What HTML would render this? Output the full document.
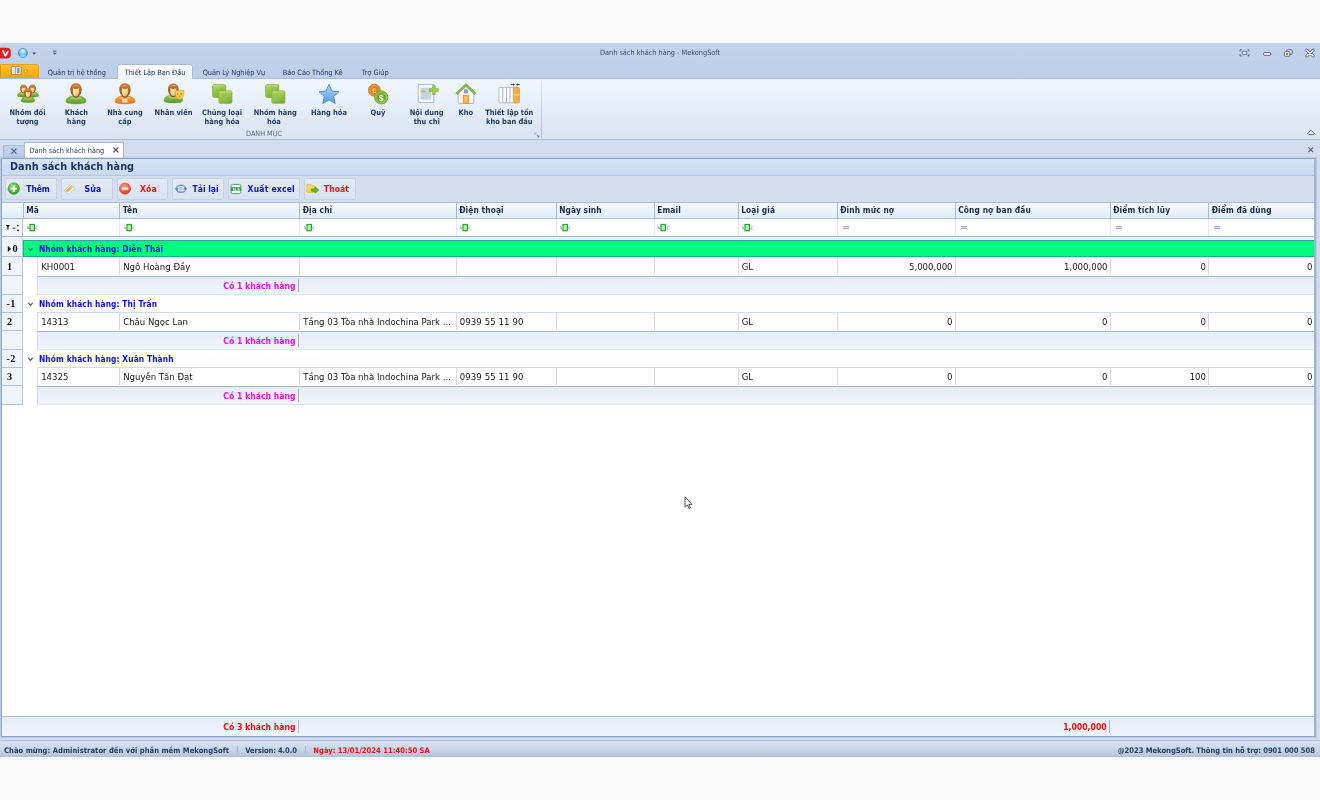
<!DOCTYPE html>
<html lang="vi">
<head>
<meta charset="utf-8">
<title>Danh sách khách hàng - MekongSoft</title>
<style>
*{box-sizing:border-box;margin:0;padding:0}
html,body{width:1320px;height:800px;overflow:hidden;background:#f9f9f9}
body{position:relative;font-family:"DejaVu Sans Condensed","Liberation Sans",sans-serif;font-size:9.5px;color:#1e1e1e}
#root{position:absolute;left:0;top:0;width:1320px;height:800px;will-change:transform}
.a{position:absolute;white-space:nowrap}
.b{font-family:"DejaVu Sans","Liberation Sans",sans-serif;font-weight:bold}
/* title bar */
#title{left:0;top:43px;width:1320px;height:36px;background:linear-gradient(#c3d3eb,#bccfe8)}
#titleline{left:0;top:78px;width:1320px;height:1px;background:#a9bbd5}
#caption{left:0;top:46.3px;width:1320px;text-align:center;font-size:7.3px;line-height:14px;color:#3b4660}
.rt{top:64.6px;height:15px;font-size:7.3px;line-height:15px;color:#1a2f52}
#appbtn{left:0;top:64px;width:39px;height:14px;border-radius:0 3px 0 0;background:linear-gradient(#fdc032,#fbb216 45%,#f8a60e);border:1px solid #e9a01a;border-left:1px solid #e2950c;border-bottom:none}
#acttab{left:116.5px;top:63.5px;width:76.5px;height:15.5px;border-radius:3px 3px 0 0;background:linear-gradient(#f9fbfe,#eff5fc);border:1px solid #a9bbd5;border-bottom:none}
/* ribbon */
#ribbon{left:0;top:79px;width:1320px;height:60px;background:linear-gradient(#eff6fd 0%,#e8f0fa 38%,#dde7f4 75%,#dae5f3 100%)}
#ribline{left:0;top:139px;width:1320px;height:1px;background:#a9bbd5}
.rl{top:108.2px;font-family:"DejaVu Sans Condensed","Liberation Sans",sans-serif;font-size:7.45px;line-height:9.3px;color:#1e395b;text-align:center;transform:translateX(-50%)}
.ri{top:82px;width:24px;height:24px;transform:translateX(-50%)}
#grpcap{left:264px;top:129px;font-size:7.2px;line-height:10px;color:#5a6b8c;transform:translateX(-50%)}
#grpsep{left:541px;top:80px;width:1px;height:58px;background:linear-gradient(rgba(160,178,205,0.2),#a9bbd5)}
/* doc tabs */
#strip{left:0;top:140px;width:1320px;height:19px;background:#d1ddee}
#gap{left:0;top:159px;width:1320px;height:582px;background:#d1ddee}
#tabx{left:3px;top:145px;width:21px;height:14px;background:linear-gradient(#c3d3ea,#b4c8e4);border:1px solid #a9bbd5;border-bottom:none;border-right:none}
#tab{left:24px;top:142px;width:100px;height:17px;background:#fff;border:1px solid #a9bbd5;border-bottom:none}
#tabt{left:29.5px;top:144.4px;font-size:7.25px;line-height:14px;color:#2b3a57}
/* panel */
#panel{left:1px;top:158px;width:1315px;height:579px;border:1px solid #8da3c3;border-right:2px solid #a2b4d0;background:#fff;box-shadow:0 0 0 1px rgba(160,180,212,0.45)}
#ptitle{left:2px;top:159px;width:1312px;height:16px;background:linear-gradient(#d6e3f7,#c9d9f0)}
#ptline{left:2px;top:175px;width:1312px;height:1px;background:#b3c5e0}
#ptext{left:10px;top:159px;font-family:"DejaVu Sans Condensed","Liberation Sans",sans-serif;font-size:10.85px;line-height:16px;color:#1e3560}
#tbar{left:2px;top:176px;width:1312px;height:26px;background:#d3dfef}
.btn{top:177.5px;height:22px;border:1px solid #c3d0e5;border-radius:2px;background:linear-gradient(#e3eaf6,#d8e2f1)}
.bt{top:178.2px;height:22px;line-height:22px;font-family:"DejaVu Sans Condensed","Liberation Sans",sans-serif;font-size:8.5px;color:#0c0ce0}
.red{color:#ee1010 !important}
/* grid */
#ghead{left:2px;top:202px;width:1312px;height:17px;background:linear-gradient(#f4f8fd,#e3ecf8);border-top:1px solid #a9bbd5;border-bottom:1px solid #a9bbd5}
.hc{top:203.4px;height:15px;line-height:15px;font-family:"DejaVu Sans Condensed","Liberation Sans",sans-serif;font-size:8.3px;letter-spacing:0.12px;color:#1e2a45}
.vl{width:1px;background:#d3dae9}
.hl{height:1px;background:#c9d6ea}
.ind{left:2px;width:21px;background:#eef3fc}
.it{left:2px;width:20px;text-align:left;padding-left:4px;font-size:10.3px;line-height:18px;letter-spacing:0.3px;color:#111}
.s{font-family:"Liberation Serif","DejaVu Serif",serif;font-weight:bold}
.grow{left:23px;width:1292px;height:18px}
.gt{left:39px;font-family:"DejaVu Sans Condensed","Liberation Sans",sans-serif;font-size:8.3px;letter-spacing:0.12px;line-height:17px;color:#0c0ce0}
.cell{font-size:9.5px;line-height:18px;color:#151515}
.num{text-align:right}
.foot{left:37px;width:1277px;height:19px;background:linear-gradient(#e6ecf7,#f0f4fb);border-top:1px solid #a6b4cc;border-left:1px solid #d6deee;border-bottom:1px solid #dde3ef}
.ft{font-family:"DejaVu Sans Condensed","Liberation Sans",sans-serif;font-size:8.6px;line-height:19px;color:#e614e6;text-align:right}
/* status */
#status{left:0;top:740px;width:1320px;height:17px;background:linear-gradient(#aebdd3 0,#b9c7dc 5%,#dbe8f7 11%,#d4e0f0 22%,#c6d4e7 60%,#b6c6dc 93%,#aab9cf 100%)}
#below{left:0;top:757px;width:1320px;height:1px;background:#fcfcfc}
.st{top:742.5px;line-height:15px;font-family:"DejaVu Sans Condensed","Liberation Sans",sans-serif;font-size:7.6px;color:#1e395b}
</style>
</head>
<body>
<div id="root">
<div class="a" id="title"></div>
<div class="a" id="titleline"></div>
<svg class="a" style="left:0;top:46px" width="60" height="14" viewBox="0 0 60 14">
  <defs>
    <radialGradient id="gb" cx="0.5" cy="0.28" r="0.8"><stop offset="0" stop-color="#f4fbff"/><stop offset="0.4" stop-color="#8ccaf4"/><stop offset="0.8" stop-color="#2a8fe0"/><stop offset="1" stop-color="#1878d2"/></radialGradient>
  </defs>
  <rect x="-4" y="1.7" width="14.8" height="10.8" rx="4" fill="#e31b28"/>
  <path d="M3 4.8 L5.4 9.8 L7.8 5.6" fill="none" stroke="#fff" stroke-width="1.7" stroke-linejoin="round" stroke-linecap="round"/>
  <circle cx="22.9" cy="7" r="4.5" fill="url(#gb)" stroke="#2583d8" stroke-width="0.7"/>
  <ellipse cx="22.9" cy="9.9" rx="3" ry="1.4" fill="#a8e6ff" opacity="0.8"/>
  <path d="M32.2 6.4 h3.8 l-1.9 2.3 z" fill="#2f4a78"/>
  <path d="M53 5.2 h3.4" stroke="#3a4d75" stroke-width="0.9"/>
  <path d="M52.8 6.7 h3.8 l-1.9 2.1 z" fill="#3a4d75"/>
</svg>
<div class="a" id="caption">Danh sách khách hàng - MekongSoft</div>
<svg class="a" style="left:1236px;top:46px" width="84" height="14" viewBox="0 0 84 14">
  <g fill="none" stroke="#46567a" stroke-width="0.9">
    <path d="M4 5.4 v-1.6 h1.6 M11.4 3.8 h1.6 v1.6 M13 8.2 v1.6 h-1.6 M5.6 9.8 h-1.6 v-1.6"/>
    <rect x="6.3" y="5.3" width="4.4" height="3" rx="0.5" fill="#fff"/>
    <rect x="27.5" y="6.6" width="7.4" height="2.8" rx="1.2" fill="#fff"/>
    <rect x="50.6" y="3.8" width="5.6" height="4.6" rx="1" fill="#e9eef7"/>
    <rect x="48.3" y="5.6" width="5.6" height="4.6" rx="1" fill="#fff"/>
    <path d="M70.8 4.2 l6.4 5.8 M77.2 4.2 l-6.4 5.8" stroke-width="3" stroke-linecap="round"/>
    <path d="M70.8 4.2 l6.4 5.8 M77.2 4.2 l-6.4 5.8" stroke="#fff" stroke-width="1.5" stroke-linecap="round"/>
  </g>
  <rect x="50.2" y="7.2" width="1.8" height="1.6" fill="#46567a"/>
</svg>
<div class="a" id="appbtn"></div>
<svg class="a" style="left:10px;top:65px" width="22" height="12" viewBox="0 0 22 12">
  <rect x="1.4" y="1.6" width="9.6" height="8" rx="0.8" fill="#fff" stroke="#8a6a2a" stroke-width="0.7"/>
  <rect x="3.2" y="2.6" width="1.6" height="6" fill="#d9dde6"/>
  <rect x="5.4" y="1.8" width="0.8" height="7.6" fill="#8a6a2a"/>
  <rect x="7" y="2.8" width="2.6" height="5.6" fill="#9c93a6"/>
  <path d="M13.6 5.2 h4.2 l-2.1 2.5 z" fill="#fff" stroke="#9a7420" stroke-width="0.6"/>
</svg>
<div class="a" id="acttab"></div>
<div class="a rt" style="left:47.8px">Quản trị hệ thống</div>
<div class="a rt" style="left:124.7px">Thiết Lập Ban Đầu</div>
<div class="a rt" style="left:202.7px">Quản Lý Nghiệp Vụ</div>
<div class="a rt" style="left:282.7px">Báo Cáo Thống Kê</div>
<div class="a rt" style="left:361.7px">Trợ Giúp</div>

<div class="a" id="ribbon"></div>
<div class="a" id="ribline"></div>
<svg width="0" height="0" style="position:absolute">
  <defs>
    <linearGradient id="gHead" x1="0" y1="0" x2="1" y2="1"><stop offset="0" stop-color="#fff0bf"/><stop offset="0.55" stop-color="#f8d592"/><stop offset="1" stop-color="#e0a050"/></linearGradient>
    <linearGradient id="gHair" x1="0" y1="0" x2="0" y2="1"><stop offset="0" stop-color="#c98440"/><stop offset="0.5" stop-color="#a95f22"/><stop offset="1" stop-color="#8c4a16"/></linearGradient>
    <linearGradient id="gGreen" x1="0" y1="0" x2="0" y2="1"><stop offset="0" stop-color="#93c652"/><stop offset="1" stop-color="#5f9c22"/></linearGradient>
    <linearGradient id="gOrange" x1="0" y1="0" x2="0" y2="1"><stop offset="0" stop-color="#f7a84a"/><stop offset="1" stop-color="#e07616"/></linearGradient>
    <linearGradient id="gSq" x1="0" y1="0" x2="0.6" y2="1"><stop offset="0" stop-color="#b2d968"/><stop offset="1" stop-color="#7aac2e"/></linearGradient>
    <linearGradient id="gStar" x1="0" y1="0" x2="0" y2="1"><stop offset="0" stop-color="#acd2f5"/><stop offset="1" stop-color="#5f9fde"/></linearGradient>
    <g id="person">
      <path class="pb" d="M2.1 19.6 C2.1 15.6 6 13.7 12 13.7 S21.9 15.6 21.9 19.6 C21.9 21.2 17 21.9 12 21.9 S2.1 21.2 2.1 19.6Z" stroke-width="0.5"/>
      <ellipse cx="12" cy="16.1" rx="5.2" ry="1.7" fill="#fff" stroke="none" opacity="0.22"/>
      <path d="M12 1.3 C15.6 1.3 17.7 3.9 17.7 7.6 C17.7 10.6 16.4 12.8 14.9 14 L14.4 15 C13.3 15.9 10.7 15.9 9.6 15 L9.1 14 C7.6 12.8 6.3 10.6 6.3 7.6 C6.3 3.9 8.4 1.3 12 1.300Z" fill="url(#gHair)" stroke="none"/>
      <path d="M9 6.3 C10.4 7.3 13.6 7.3 15 6.3 C15.3 8 15.3 10 14.9 11.6 C14.5 13.2 13.4 14.5 12 14.5 S9.5 13.2 9.1 11.6 C8.7 10 8.7 8 9 6.300Z" fill="url(#gHead)" stroke="none"/>
      <path d="M7.6 4.8 C9.5 2.7 14.5 2.7 16.4 4.8 C14.5 4.1 9.5 4.1 7.6 4.800Z" fill="#e9a868" stroke="none" opacity="0.8"/>
    </g>
  </defs>
</svg>
<!-- 1 group -->
<svg class="a ri" style="left:27.5px" viewBox="0 0 24 24">
  <g transform="translate(0.2,1.6) scale(0.62)" fill="url(#gGreen)" stroke="#55901e"><use href="#person"/></g>
  <g transform="translate(9,1.6) scale(0.62)" fill="url(#gGreen)" stroke="#55901e"><use href="#person"/></g>
  <g transform="translate(3.7,5.4) scale(0.69)" fill="url(#gGreen)" stroke="#55901e"><use href="#person"/></g>
</svg>
<div class="a rl b" style="left:27.5px">Nhóm đối<br>tượng</div>
<!-- 2 customer -->
<svg class="a ri" style="left:76.3px" viewBox="0 0 24 24"><g fill="url(#gGreen)" stroke="#55901e"><use href="#person"/></g></svg>
<div class="a rl b" style="left:76.3px">Khách<br>hàng</div>
<!-- 3 supplier -->
<svg class="a ri" style="left:125.3px" viewBox="0 0 24 24"><g fill="url(#gOrange)" stroke="#c96a12"><use href="#person"/></g><rect x="9.4" y="17" width="5" height="3.4" fill="#fff" opacity="0.9"/><path d="M10.4 18 v1.6 M11.8 18 v1.6 M13.2 18 v1.6" stroke="#c9a27a" stroke-width="0.7"/></svg>
<div class="a rl b" style="left:125px">Nhà cung<br>cấp</div>
<!-- 4 staff -->
<svg class="a ri" style="left:174px" viewBox="0 0 24 24"><g transform="translate(0.1,0.3) scale(0.94)" fill="url(#gGreen)" stroke="#55901e"><use href="#person"/></g>
  <path d="M13.2 9 c1.6-0.9 2.8-0.6 4.2-0.2 c1.4-0.4 2.8-0.9 4.3-0.2 c0.5 4.2-0.6 7.6-4.2 9.2 c-3.4-1.4-4.8-4.6-4.3-8.800z" fill="#f7d04c" stroke="#c79a24" stroke-width="0.6"/>
  <ellipse cx="15.7" cy="12" rx="0.9" ry="0.6" fill="#8a6a14"/><ellipse cx="19.2" cy="11.8" rx="0.9" ry="0.6" fill="#8a6a14"/>
  <path d="M16.2 14.6 c0.8 1 2 1 2.8 0z" fill="#b0561c"/>
  <path d="M17.2 17.8 l0.7 4 l0.7-4z" fill="#6a7894"/>
</svg>
<div class="a rl b" style="left:173.5px">Nhân viên</div>
<!-- 5 squares -->
<svg class="a ri" style="left:222px" viewBox="0 0 24 24">
  <rect x="2.6" y="2.6" width="13.2" height="12.8" rx="1.6" fill="url(#gSq)" stroke="#7fae36" stroke-width="0.7"/>
  <rect x="8.8" y="8.8" width="13.2" height="12.8" rx="1.6" fill="url(#gSq)" stroke="#86b63c" stroke-width="0.7" opacity="0.94"/>
  <path d="M3.6 3.8 h11.2 M9.8 10 h11.2" stroke="#d4ec9c" stroke-width="0.8" opacity="0.8"/>
</svg>
<div class="a rl b" style="left:222px">Chủng loại<br>hàng hóa</div>
<!-- 6 squares -->
<svg class="a ri" style="left:275px" viewBox="0 0 24 24">
  <rect x="2.6" y="2.6" width="13.2" height="12.8" rx="1.6" fill="url(#gSq)" stroke="#7fae36" stroke-width="0.7"/>
  <rect x="8.8" y="8.8" width="13.2" height="12.8" rx="1.6" fill="url(#gSq)" stroke="#86b63c" stroke-width="0.7" opacity="0.94"/>
  <path d="M3.6 3.8 h11.2 M9.8 10 h11.2" stroke="#d4ec9c" stroke-width="0.8" opacity="0.8"/>
</svg>
<div class="a rl b" style="left:275.2px">Nhóm hàng<br><span style="padding-right:2.5px">hóa</span></div>
<!-- 7 star -->
<svg class="a ri" style="left:329.4px" viewBox="0 0 24 24">
  <path d="M12 2.4 l2.9 6.6 l7.1 0.7 l-5.3 4.8 l1.5 7 l-6.2-3.6 l-6.2 3.6 l1.5-7 l-5.3-4.8 l7.1-0.7z" fill="url(#gStar)" stroke="#3f7fc4" stroke-width="0.8" stroke-linejoin="round"/>
</svg>
<div class="a rl b" style="left:329px">Hàng hóa</div>
<!-- 8 fund -->
<svg class="a ri" style="left:377.8px" viewBox="0 0 24 24">
  <circle cx="8.4" cy="8.2" r="6" fill="#f0923a" stroke="#cf7420" stroke-width="0.8"/>
  <circle cx="8.4" cy="8.2" r="4.2" fill="#e27f28"/>
  <text x="8.2" y="11" font-family="Liberation Sans, sans-serif" font-weight="bold" font-size="7.5" fill="#f8c98c" text-anchor="middle">€</text>
  <circle cx="15.2" cy="15.4" r="6.6" fill="#93c845" stroke="#64992a" stroke-width="0.8"/>
  <circle cx="15.2" cy="15.4" r="4.8" fill="#70a92c"/>
  <text x="15.2" y="18.5" font-family="Liberation Sans, sans-serif" font-weight="bold" font-size="8.5" fill="#f4fbe6" text-anchor="middle">$</text>
</svg>
<div class="a rl b" style="left:378px">Quỹ</div>
<!-- 9 doc plus -->
<svg class="a ri" style="left:427px" viewBox="0 0 24 24">
  <rect x="3.2" y="2.4" width="15.6" height="18" fill="#f8fafd" stroke="#a7b1c6" stroke-width="0.9"/>
  <rect x="5.6" y="5.6" width="10.8" height="12" fill="#c9d2e1"/>
  <rect x="5.6" y="8.8" width="5" height="1.4" fill="#96c65a"/>
  <path d="M14.4 6.6 h3 v-3 h2.8 v3 h3 v2.8 h-3 v3 h-2.8 v-3 h-3z" fill="#9bcf52" stroke="#6ea52e" stroke-width="0.6"/>
</svg>
<div class="a rl b" style="left:426.7px">Nội dung<br>thu chi</div>
<!-- 10 warehouse -->
<svg class="a ri" style="left:466px" viewBox="0 0 24 24">
  <path d="M4.2 10.6 l7.8-7 l7.8 7 v10 q0 0.8-0.8 0.8 h-14 q-0.8 0-0.8-0.800z" fill="#f4f6fa" stroke="#9ea9be" stroke-width="0.8"/>
  <path d="M1.8 11 l10.2-9.4 l10.2 9.4 l-1.5 1.5 l-8.7-8 l-8.7 8z" fill="#84b944" stroke="#64982c" stroke-width="0.5"/>
  <rect x="9.2" y="13.2" width="5.6" height="8.2" fill="#f6ad3c" stroke="#d58318" stroke-width="0.6"/>
  <rect x="10.6" y="14.4" width="2.8" height="5.8" fill="#fbc870" opacity="0.8"/>
  <rect x="10.5" y="7.8" width="3" height="3.2" fill="#8aa0d6" stroke="#6279b0" stroke-width="0.5"/>
</svg>
<div class="a rl b" style="left:465.8px">Kho</div>
<!-- 11 stock setup -->
<svg class="a ri" style="left:508.5px" viewBox="0 0 24 24">
  <rect x="2" y="5.4" width="20.2" height="15.4" rx="1.4" fill="#fbfcfe" stroke="#a3acbf" stroke-width="0.8"/>
  <path d="M5.8 5.8 v14.6 M9.4 5.8 v14.6 M13 5.8 v14.6" stroke="#a3acbf" stroke-width="0.9"/>
  <rect x="16.4" y="5.4" width="5.8" height="15.4" rx="1.2" fill="#f6ae40" stroke="#da9126" stroke-width="0.7"/>
  <path d="M16.8 12.8 h5" stroke="#fce3ae" stroke-width="0.9"/>
  <path d="M13.8 2.6 h3.4 M19.6 2.6 h3.4" stroke="#2c3650" stroke-width="0.8"/>
  <path d="M17.8 2.6 l-1.7-1.4 v2.800z M19 2.6 l1.7-1.4 v2.800z" fill="#2c3650"/>
</svg>
<div class="a rl b" style="left:509.3px">Thiết lập tồn<br>kho ban đầu</div>
<div class="a" id="grpcap">DANH MỤC</div>
<div class="a" id="grpsep"></div>
<svg class="a" style="left:533.5px;top:131.5px" width="6" height="6" viewBox="0 0 6 6"><path d="M0.8 3.2 v-2.4 h2.4" fill="none" stroke="#8a9ab8" stroke-width="0.7"/><path d="M2.6 2.6 l2.2 2.2 M5 3.2 v1.8 h-1.8" fill="none" stroke="#6b7c9c" stroke-width="0.8"/></svg>
<svg class="a" style="left:1306px;top:128px" width="10" height="8" viewBox="0 0 10 8"><path d="M1.6 5.6 l3.4-3.4 l3.4 3.4 l-1.2 1 h-4.4z" fill="#fff" stroke="#4a5b80" stroke-width="0.9" stroke-linejoin="round"/></svg>

<div class="a" id="strip"></div>
<div class="a" id="gap"></div>
<div class="a" id="tabx"></div>
<svg class="a" style="left:10px;top:147px" width="8" height="8" viewBox="0 0 8 8"><path d="M1.4 1.6 l5 5 M6.4 1.6 l-5 5" stroke="#4f5f80" stroke-width="1.1"/></svg>
<div class="a" id="tab"></div>
<div class="a" id="tabt">Danh sách khách hàng</div>
<svg class="a" style="left:112px;top:146px" width="8" height="8" viewBox="0 0 8 8"><path d="M1.4 1.4 l5 5 M6.4 1.4 l-5 5" stroke="#3d4a66" stroke-width="1.3"/></svg>
<svg class="a" style="left:1307px;top:146px" width="8" height="8" viewBox="0 0 8 8"><path d="M1.4 1.4 l4.8 4.8 M6.2 1.4 l-4.8 4.8" stroke="#4f5f80" stroke-width="1.2"/></svg>

<div class="a" id="panel"></div>
<div class="a" id="ptitle"></div>
<div class="a" id="ptline"></div>
<div class="a b" id="ptext">Danh sách khách hàng</div>
<div class="a" id="tbar"></div>
<div class="a btn" style="left:5px;width:52px"></div>
<div class="a btn" style="left:61px;width:52px"></div>
<div class="a btn" style="left:117px;width:51px"></div>
<div class="a btn" style="left:172px;width:52px"></div>
<div class="a btn" style="left:228px;width:72px"></div>
<div class="a btn" style="left:304px;width:52px"></div>
<!-- add -->
<svg class="a" style="left:7px;top:182px" width="14" height="14" viewBox="0 0 14 14">
  <defs><radialGradient id="gAdd" cx="0.4" cy="0.3" r="0.8"><stop offset="0" stop-color="#8fe06a"/><stop offset="1" stop-color="#2d9a1c"/></radialGradient>
  <radialGradient id="gDel" cx="0.4" cy="0.3" r="0.8"><stop offset="0" stop-color="#ff9a7a"/><stop offset="1" stop-color="#dc3a1a"/></radialGradient></defs>
  <circle cx="6.8" cy="6.6" r="5.7" fill="url(#gAdd)" stroke="#2f8f20" stroke-width="0.6"/>
  <path d="M6.8 3.4 v6.4 M3.6 6.6 h6.4" stroke="#fff" stroke-width="1.9"/>
</svg>
<div class="a bt b" style="left:26.3px;letter-spacing:-0.1px">Thêm</div>
<!-- edit -->
<svg class="a" style="left:63px;top:181.5px" width="14" height="14" viewBox="0 0 14 14">
  <path d="M1.6 8.4 l5.6-5.4 l4.8 3.2 l-5.4 5.2 h-2.600z" fill="#fdfdfe" stroke="#c4c9d4" stroke-width="0.7"/>
  <path d="M2.8 9.2 l5.2-5 l1.8 1.2 l-5.2 5z" fill="#f4bd3a"/>
  <path d="M3 9.4 l5-4.8" stroke="#d79a1c" stroke-width="0.7"/>
</svg>
<div class="a bt b" style="left:84.5px;letter-spacing:0.25px">Sửa</div>
<!-- delete -->
<svg class="a" style="left:118px;top:182px" width="14" height="14" viewBox="0 0 14 14">
  <circle cx="7" cy="6.6" r="5.6" fill="url(#gDel)" stroke="#d2401e" stroke-width="0.6"/>
  <path d="M3.8 6.6 h6.4" stroke="#fff" stroke-width="2"/>
</svg>
<div class="a bt b red" style="left:140px;letter-spacing:0.12px">Xóa</div>
<!-- reload -->
<svg class="a" style="left:174px;top:182px" width="14" height="14" viewBox="0 0 14 14">
  <ellipse cx="7" cy="6.8" rx="4.7" ry="3.5" fill="#eef3fb" stroke="#7d9bcc" stroke-width="1.5"/>
  <path d="M0.8 6.2 l2.2 2.6 l1.8-2.800z M13.2 7.4 l-2.2-2.6 l-1.8 2.800z" fill="#6384bb"/>
  <ellipse cx="7" cy="6.8" rx="1.9" ry="1.4" fill="#c9d7ee" stroke="#8fa8d2" stroke-width="0.6"/>
</svg>
<div class="a bt b" style="left:192.5px">Tải lại</div>
<!-- excel -->
<svg class="a" style="left:229px;top:182px" width="14" height="14" viewBox="0 0 14 14">
  <rect x="2.2" y="2.4" width="9.6" height="9.2" rx="1.2" fill="#f6faf6" stroke="#4a9a62" stroke-width="0.9"/>
  <rect x="1.8" y="5.2" width="10.4" height="3.8" fill="#3f9658"/>
  <text x="7.1" y="8.5" font-family="Liberation Sans, sans-serif" font-weight="bold" font-size="3.8" fill="#eaf6ea" text-anchor="middle">XLS</text>
</svg>
<div class="a bt b" style="left:247.6px;letter-spacing:0.2px">Xuất excel</div>
<!-- exit -->
<svg class="a" style="left:306px;top:182px" width="14" height="14" viewBox="0 0 14 14">
  <path d="M1 2.6 h3.4 l1 1.2 h3.6 v6.4 h-8z" fill="#f7d54c" stroke="#d9b02a" stroke-width="0.7"/>
  <path d="M1.4 5 h7.2" stroke="#fbe88c" stroke-width="0.8"/>
  <path d="M5.4 7 h3.8 v-1.9 l3.6 3 l-3.6 3 v-1.9 h-3.800z" fill="#5cbc34" stroke="#3f931e" stroke-width="0.7" stroke-linejoin="round"/>
</svg>
<div class="a bt b red" style="left:323.8px;letter-spacing:0.12px">Thoát</div>

<div class="a" id="ghead"></div>
<div class="a hc b" style="left:26.2px">Mã</div>
<div class="a hc b" style="left:122.7px">Tên</div>
<div class="a hc b" style="left:302.7px">Địa chỉ</div>
<div class="a hc b" style="left:459.2px">Điện thoại</div>
<div class="a hc b" style="left:559.2px">Ngày sinh</div>
<div class="a hc b" style="left:657.2px">Email</div>
<div class="a hc b" style="left:741.2px">Loại giá</div>
<div class="a hc b" style="left:840.2px">Đinh mức nợ</div>
<div class="a hc b" style="left:958.2px">Công nợ ban đầu</div>
<div class="a hc b" style="left:1113.2px">Điểm tích lũy</div>
<div class="a hc b" style="left:1211.7px">Điểm đã dùng</div>
<div class="a vl" style="left:23px;top:203px;height:15px;background:#a9b9d3"></div>
<div class="a vl" style="left:119px;top:203px;height:15px;background:#a9b9d3"></div>
<div class="a vl" style="left:299px;top:203px;height:15px;background:#a9b9d3"></div>
<div class="a vl" style="left:456px;top:203px;height:15px;background:#a9b9d3"></div>
<div class="a vl" style="left:556px;top:203px;height:15px;background:#a9b9d3"></div>
<div class="a vl" style="left:654px;top:203px;height:15px;background:#a9b9d3"></div>
<div class="a vl" style="left:738px;top:203px;height:15px;background:#a9b9d3"></div>
<div class="a vl" style="left:837px;top:203px;height:15px;background:#a9b9d3"></div>
<div class="a vl" style="left:955px;top:203px;height:15px;background:#a9b9d3"></div>
<div class="a vl" style="left:1110px;top:203px;height:15px;background:#a9b9d3"></div>
<div class="a vl" style="left:1208px;top:203px;height:15px;background:#a9b9d3"></div>
<div class="a" style="left:2px;top:219px;width:1312px;height:18px;background:#fff;border-bottom:1px solid #a3b3cd"></div>
<div class="a ind" style="top:219px;height:17px"></div>
<div class="a vl" style="left:22px;top:219px;height:17px;background:#b9c6de"></div>
<div class="a vl" style="left:119px;top:219px;height:17px;background:#e4e9f5"></div>
<div class="a vl" style="left:299px;top:219px;height:17px;background:#e4e9f5"></div>
<div class="a vl" style="left:456px;top:219px;height:17px;background:#e4e9f5"></div>
<div class="a vl" style="left:556px;top:219px;height:17px;background:#e4e9f5"></div>
<div class="a vl" style="left:654px;top:219px;height:17px;background:#e4e9f5"></div>
<div class="a vl" style="left:738px;top:219px;height:17px;background:#e4e9f5"></div>
<div class="a vl" style="left:837px;top:219px;height:17px;background:#e4e9f5"></div>
<div class="a vl" style="left:955px;top:219px;height:17px;background:#e4e9f5"></div>
<div class="a vl" style="left:1110px;top:219px;height:17px;background:#e4e9f5"></div>
<div class="a vl" style="left:1208px;top:219px;height:17px;background:#e4e9f5"></div>
<svg class="a" style="left:5px;top:223px" width="16" height="10" viewBox="0 0 16 10"><path d="M0.8 2 h4.2 l-1.5 2 v2.6 h-1.2 v-2.600z" fill="#1a1a1a"/><path d="M7.6 5.2 h2.8" stroke="#333" stroke-width="1"/><rect x="12" y="2" width="1.6" height="1.4" fill="#333"/><rect x="12.2" y="6.6" width="1.7" height="1.5" fill="#4a1010"/></svg>
<svg class="a" style="left:26.4px;top:223px" width="13" height="10" viewBox="0 0 13 10"><rect x="4" y="1.5" width="4.4" height="6.2" fill="#b8f5ae" stroke="#2f9e3c" stroke-width="1.2"/><path d="M0.9 3.9 l0.9-0.3 l0.9 2.8 M1.2 5.3 h1.2 M11.6 3.7 c-1.2-0.2-1.8 0.6-1.8 1.3 c0 0.8 0.6 1.5 1.8 1.2" fill="none" stroke="#8a93a8" stroke-width="0.8"/></svg>
<svg class="a" style="left:122.9px;top:223px" width="13" height="10" viewBox="0 0 13 10"><rect x="4" y="1.5" width="4.4" height="6.2" fill="#b8f5ae" stroke="#2f9e3c" stroke-width="1.2"/><path d="M0.9 3.9 l0.9-0.3 l0.9 2.8 M1.2 5.3 h1.2 M11.6 3.7 c-1.2-0.2-1.8 0.6-1.8 1.3 c0 0.8 0.6 1.5 1.8 1.2" fill="none" stroke="#8a93a8" stroke-width="0.8"/></svg>
<svg class="a" style="left:302.9px;top:223px" width="13" height="10" viewBox="0 0 13 10"><rect x="4" y="1.5" width="4.4" height="6.2" fill="#b8f5ae" stroke="#2f9e3c" stroke-width="1.2"/><path d="M0.9 3.9 l0.9-0.3 l0.9 2.8 M1.2 5.3 h1.2 M11.6 3.7 c-1.2-0.2-1.8 0.6-1.8 1.3 c0 0.8 0.6 1.5 1.8 1.2" fill="none" stroke="#8a93a8" stroke-width="0.8"/></svg>
<svg class="a" style="left:459.4px;top:223px" width="13" height="10" viewBox="0 0 13 10"><rect x="4" y="1.5" width="4.4" height="6.2" fill="#b8f5ae" stroke="#2f9e3c" stroke-width="1.2"/><path d="M0.9 3.9 l0.9-0.3 l0.9 2.8 M1.2 5.3 h1.2 M11.6 3.7 c-1.2-0.2-1.8 0.6-1.8 1.3 c0 0.8 0.6 1.5 1.8 1.2" fill="none" stroke="#8a93a8" stroke-width="0.8"/></svg>
<svg class="a" style="left:559.4px;top:223px" width="13" height="10" viewBox="0 0 13 10"><rect x="4" y="1.5" width="4.4" height="6.2" fill="#b8f5ae" stroke="#2f9e3c" stroke-width="1.2"/><path d="M0.9 3.9 l0.9-0.3 l0.9 2.8 M1.2 5.3 h1.2 M11.6 3.7 c-1.2-0.2-1.8 0.6-1.8 1.3 c0 0.8 0.6 1.5 1.8 1.2" fill="none" stroke="#8a93a8" stroke-width="0.8"/></svg>
<svg class="a" style="left:657.4px;top:223px" width="13" height="10" viewBox="0 0 13 10"><rect x="4" y="1.5" width="4.4" height="6.2" fill="#b8f5ae" stroke="#2f9e3c" stroke-width="1.2"/><path d="M0.9 3.9 l0.9-0.3 l0.9 2.8 M1.2 5.3 h1.2 M11.6 3.7 c-1.2-0.2-1.8 0.6-1.8 1.3 c0 0.8 0.6 1.5 1.8 1.2" fill="none" stroke="#8a93a8" stroke-width="0.8"/></svg>
<svg class="a" style="left:741.4px;top:223px" width="13" height="10" viewBox="0 0 13 10"><rect x="4" y="1.5" width="4.4" height="6.2" fill="#b8f5ae" stroke="#2f9e3c" stroke-width="1.2"/><path d="M0.9 3.9 l0.9-0.3 l0.9 2.8 M1.2 5.3 h1.2 M11.6 3.7 c-1.2-0.2-1.8 0.6-1.8 1.3 c0 0.8 0.6 1.5 1.8 1.2" fill="none" stroke="#8a93a8" stroke-width="0.8"/></svg>
<div class="a" style="left:843px;top:226px;width:6px;height:3px;border-top:1px solid #a4aacb;border-bottom:1px solid #a4aacb;background:#dfe2ef"></div>
<div class="a" style="left:961px;top:226px;width:6px;height:3px;border-top:1px solid #a4aacb;border-bottom:1px solid #a4aacb;background:#dfe2ef"></div>
<div class="a" style="left:1116px;top:226px;width:6px;height:3px;border-top:1px solid #a4aacb;border-bottom:1px solid #a4aacb;background:#dfe2ef"></div>
<div class="a" style="left:1214px;top:226px;width:6px;height:3px;border-top:1px solid #a4aacb;border-bottom:1px solid #a4aacb;background:#dfe2ef"></div>
<div class="a" style="left:2px;top:237px;width:1312px;height:3px;background:#eef3fb"></div>
<div class="a ind" style="top:239px;height:166px"></div>
<div class="a vl" style="left:22px;top:239px;height:166px;background:#bcc8df"></div>
<div class="a hl" style="left:2px;top:256px;width:21px;background:#b3bfd6"></div>
<div class="a hl" style="left:2px;top:275px;width:21px;background:#b3bfd6"></div>
<div class="a hl" style="left:2px;top:294px;width:21px;background:#b3bfd6"></div>
<div class="a" style="left:23px;top:240px;width:1291px;height:17px;background:#00fd80;border:1px solid #22ad8e;border-right:none"></div>
<svg class="a" style="left:6.5px;top:245px" width="5" height="8" viewBox="0 0 5 8"><path d="M0.8 0.8 l3.2 3.1 l-3.2 3.100z" fill="#111"/></svg>
<div class="a it s" style="top:239.7px;padding-left:10.5px">0</div>
<svg class="a" style="left:27px;top:247px" width="7" height="5" viewBox="0 0 7 5"><path d="M1.3 0.9 l2.2 2.4 l2.2-2.4" fill="none" stroke="#118257" stroke-width="1.25"/></svg>
<div class="a gt b" style="top:240.6px">Nhóm khách hàng: Diễn Thái</div>
<div class="a it s" style="top:257.5px;padding-left:5px">1</div>
<div class="a vl" style="left:37px;top:257px;height:18px"></div>
<div class="a vl" style="left:119px;top:257px;height:18px"></div>
<div class="a vl" style="left:299px;top:257px;height:18px"></div>
<div class="a vl" style="left:456px;top:257px;height:18px"></div>
<div class="a vl" style="left:556px;top:257px;height:18px"></div>
<div class="a vl" style="left:654px;top:257px;height:18px"></div>
<div class="a vl" style="left:738px;top:257px;height:18px"></div>
<div class="a vl" style="left:837px;top:257px;height:18px"></div>
<div class="a vl" style="left:955px;top:257px;height:18px"></div>
<div class="a vl" style="left:1110px;top:257px;height:18px"></div>
<div class="a vl" style="left:1208px;top:257px;height:18px"></div>
<div class="a cell" style="left:41.2px;top:258px">KH0001</div>
<div class="a cell" style="left:123.2px;top:258px">Ngô Hoàng Đầy</div>
<div class="a cell" style="left:741.7px;top:258px">GL</div>
<div class="a cell num" style="left:837px;width:115.5px;top:258px">5,000,000</div>
<div class="a cell num" style="left:955px;width:152.5px;top:258px">1,000,000</div>
<div class="a cell num" style="left:1110px;width:96px;top:258px">0</div>
<div class="a cell num" style="left:1208.5px;width:104px;top:258px">0</div>
<div class="a foot" style="top:276px"></div>
<div class="a ft b" style="left:119px;width:176.5px;top:277px">Có 1 khách hàng</div>
<div class="a vl" style="left:298px;top:279px;height:13px;background:#a3afc4"></div>
<div class="a hl" style="left:2px;top:312px;width:21px;background:#b3bfd6"></div>
<div class="a hl" style="left:2px;top:330px;width:21px;background:#b3bfd6"></div>
<div class="a hl" style="left:2px;top:349px;width:21px;background:#b3bfd6"></div>
<div class="a it s" style="top:294.7px;padding-left:4.5px">-1</div>
<svg class="a" style="left:27px;top:302px" width="7" height="5" viewBox="0 0 7 5"><path d="M1.3 0.9 l2.2 2.4 l2.2-2.4" fill="none" stroke="#46526c" stroke-width="1.25"/></svg>
<div class="a gt b" style="top:295.6px">Nhóm khách hàng: Thị Trấn</div>
<div class="a hl" style="left:37px;top:312px;width:1277px;background:#d3dcec"></div>
<div class="a it s" style="top:312.5px;padding-left:5px">2</div>
<div class="a vl" style="left:37px;top:312px;height:18px"></div>
<div class="a vl" style="left:119px;top:312px;height:18px"></div>
<div class="a vl" style="left:299px;top:312px;height:18px"></div>
<div class="a vl" style="left:456px;top:312px;height:18px"></div>
<div class="a vl" style="left:556px;top:312px;height:18px"></div>
<div class="a vl" style="left:654px;top:312px;height:18px"></div>
<div class="a vl" style="left:738px;top:312px;height:18px"></div>
<div class="a vl" style="left:837px;top:312px;height:18px"></div>
<div class="a vl" style="left:955px;top:312px;height:18px"></div>
<div class="a vl" style="left:1110px;top:312px;height:18px"></div>
<div class="a vl" style="left:1208px;top:312px;height:18px"></div>
<div class="a cell" style="left:41.2px;top:313px">14313</div>
<div class="a cell" style="left:123.2px;top:313px">Châu Ngọc Lan</div>
<div class="a cell" style="left:303.2px;top:313px;letter-spacing:0.015px">Tầng 03 Tòa nhà Indochina Park ...</div>
<div class="a cell" style="left:459.7px;top:313px;letter-spacing:0.1px">0939 55 11 90</div>
<div class="a cell" style="left:741.7px;top:313px">GL</div>
<div class="a cell num" style="left:837px;width:115.5px;top:313px">0</div>
<div class="a cell num" style="left:955px;width:152.5px;top:313px">0</div>
<div class="a cell num" style="left:1110px;width:96px;top:313px">0</div>
<div class="a cell num" style="left:1208.5px;width:104px;top:313px">0</div>
<div class="a foot" style="top:331px"></div>
<div class="a ft b" style="left:119px;width:176.5px;top:332px">Có 1 khách hàng</div>
<div class="a vl" style="left:298px;top:334px;height:13px;background:#a3afc4"></div>
<div class="a hl" style="left:2px;top:367px;width:21px;background:#b3bfd6"></div>
<div class="a hl" style="left:2px;top:385px;width:21px;background:#b3bfd6"></div>
<div class="a hl" style="left:2px;top:404px;width:21px;background:#b3bfd6"></div>
<div class="a it s" style="top:349.7px;padding-left:4.5px">-2</div>
<svg class="a" style="left:27px;top:357px" width="7" height="5" viewBox="0 0 7 5"><path d="M1.3 0.9 l2.2 2.4 l2.2-2.4" fill="none" stroke="#46526c" stroke-width="1.25"/></svg>
<div class="a gt b" style="top:350.6px">Nhóm khách hàng: Xuân Thành</div>
<div class="a hl" style="left:37px;top:367px;width:1277px;background:#d3dcec"></div>
<div class="a it s" style="top:367.5px;padding-left:5px">3</div>
<div class="a vl" style="left:37px;top:367px;height:18px"></div>
<div class="a vl" style="left:119px;top:367px;height:18px"></div>
<div class="a vl" style="left:299px;top:367px;height:18px"></div>
<div class="a vl" style="left:456px;top:367px;height:18px"></div>
<div class="a vl" style="left:556px;top:367px;height:18px"></div>
<div class="a vl" style="left:654px;top:367px;height:18px"></div>
<div class="a vl" style="left:738px;top:367px;height:18px"></div>
<div class="a vl" style="left:837px;top:367px;height:18px"></div>
<div class="a vl" style="left:955px;top:367px;height:18px"></div>
<div class="a vl" style="left:1110px;top:367px;height:18px"></div>
<div class="a vl" style="left:1208px;top:367px;height:18px"></div>
<div class="a cell" style="left:41.2px;top:368px">14325</div>
<div class="a cell" style="left:123.2px;top:368px">Nguyễn Tấn Đạt</div>
<div class="a cell" style="left:303.2px;top:368px;letter-spacing:0.015px">Tầng 03 Tòa nhà Indochina Park ...</div>
<div class="a cell" style="left:459.7px;top:368px;letter-spacing:0.1px">0939 55 11 90</div>
<div class="a cell" style="left:741.7px;top:368px">GL</div>
<div class="a cell num" style="left:837px;width:115.5px;top:368px">0</div>
<div class="a cell num" style="left:955px;width:152.5px;top:368px">0</div>
<div class="a cell num" style="left:1110px;width:96px;top:368px">100</div>
<div class="a cell num" style="left:1208.5px;width:104px;top:368px">0</div>
<div class="a foot" style="top:386px"></div>
<div class="a ft b" style="left:119px;width:176.5px;top:387px">Có 1 khách hàng</div>
<div class="a vl" style="left:298px;top:389px;height:13px;background:#a3afc4"></div>
<div class="a" style="left:2px;top:716px;width:1312px;height:20px;background:linear-gradient(#e4ecf8,#f0f5fc);border-top:1px solid #a9bbd5"></div>
<div class="a ft b red" style="left:119px;width:176.5px;top:717.6px">Có 3 khách hàng</div>
<div class="a vl" style="left:298px;top:720px;height:13px;background:#a9b7d0"></div>
<div class="a ft b red" style="left:955px;width:151.7px;top:717.6px">1,000,000</div>
<div class="a vl" style="left:1109px;top:720px;height:13px;background:#a9b7d0"></div>
<svg class="a" style="left:684px;top:496px" width="10" height="14" viewBox="0 0 10 14"><path d="M1 0.8 v10.4 l2.4-2.2 l1.6 3.6 l1.4-0.6 l-1.6-3.6 h3.200z" fill="#fff" stroke="#222" stroke-width="0.8" stroke-linejoin="round"/></svg>

<div class="a" id="status"></div><div class="a" id="below"></div>
<div class="a st b" style="left:4px;letter-spacing:0.025px">Chào mừng: Administrator đến với phần mềm MekongSoft</div>
<div class="a vl" style="left:237px;top:746px;height:7px;background:#aab7cc"></div>
<div class="a st b" style="left:245.3px;letter-spacing:-0.14px">Version: 4.0.0</div>
<div class="a vl" style="left:305px;top:746px;height:7px;background:#aab7cc"></div>
<div class="a st b red" style="left:313.3px">Ngày: 13/01/2024 11:40:50 SA</div>
<div class="a st b" style="right:5px;letter-spacing:-0.04px">@2023 MekongSoft. Thông tin hỗ trợ: 0901 000 508</div>

</div>
</body>
</html>
